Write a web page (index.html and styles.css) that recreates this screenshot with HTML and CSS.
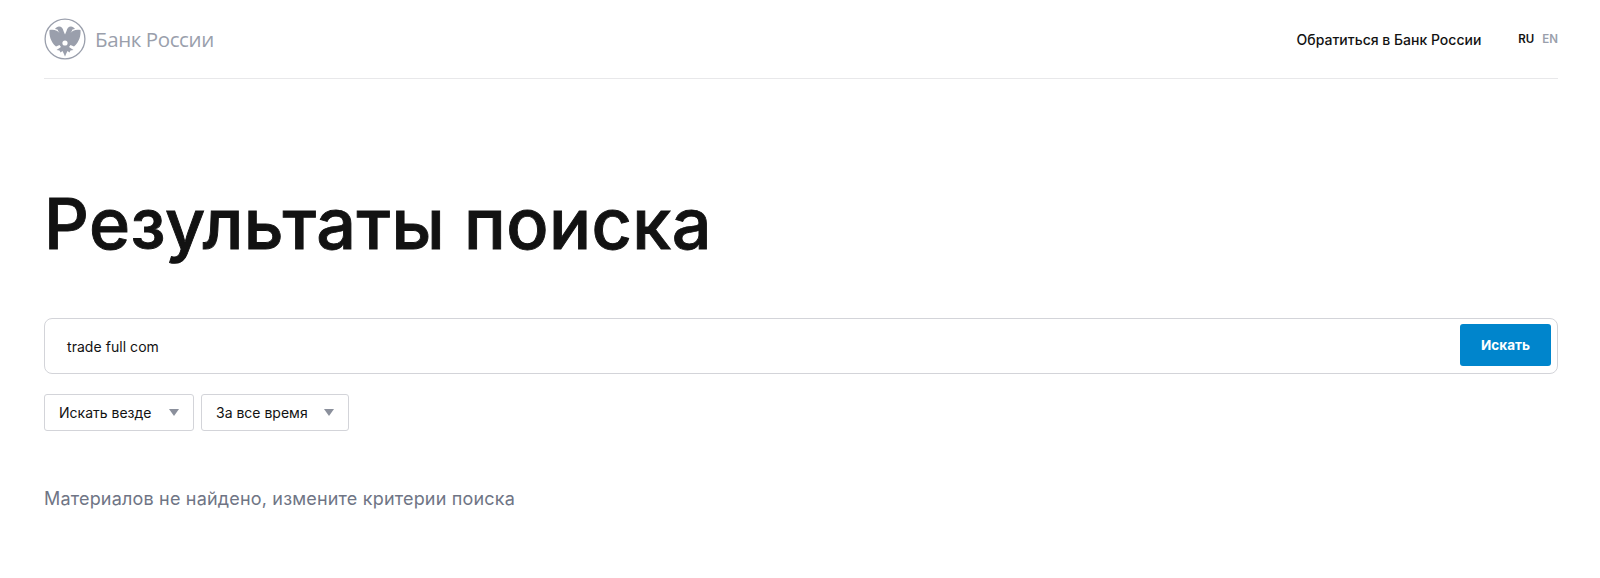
FILE: index.html
```html
<!DOCTYPE html>
<html lang="ru">
<head>
  <meta charset="UTF-8" />
  <meta name="viewport" content="width=device-width, initial-scale=1.0"/>
  <title>Результаты поиска</title>
  <link rel="stylesheet" href="styles.css">
</head>
<body>
  <header class="header">
    <a class="logo" href="#">
      <svg class="logo-icon" viewBox="0 0 42 42" width="42" height="42">
        <circle cx="21" cy="21" r="19.9" fill="none" stroke="#9a9fac" stroke-width="1.3"/>
        <path id="eagle-half" fill="#9a9fac" d="M21.2 17L19.5 13C19 10.5 17.5 8.5 15 8.5C13.5 8.5 12 9.5 11 11L13.5 11.5C14 13 15 14 15.5 15C14 12.5 10 11 5.5 12C5 17 6.5 24 12 28.5L15.5 27L17 29L12.5 32L15.5 32.5L16.5 34.5L18.5 33L21.2 38.5Z"/>
        <use href="#eagle-half" transform="matrix(-1 0 0 1 42 0)"/>
        <circle cx="21" cy="25" r="2.6" fill="#fff"/>
      </svg>
      <span class="logo-text">Банк России</span>
    </a>
    <nav class="header-nav">
      <a class="contact" href="#">Обратиться в Банк России</a>
      <div class="langs">
        <a class="lang active" href="#">RU</a>
        <a class="lang" href="#">EN</a>
      </div>
    </nav>
  </header>

  <main>
    <h1>Результаты поиска</h1>

    <form class="search">
      <span class="search-value">trade full com</span>
      <button class="search-btn" type="button">Искать</button>
    </form>

    <div class="filters">
      <div class="select select-where">Искать везде<span class="arrow"></span></div>
      <div class="select select-when">За все время<span class="arrow"></span></div>
    </div>

    <p class="empty">Материалов не найдено, измените критерии поиска</p>
  </main>
</body>
</html>
```

FILE: styles.css
```css
body {
  font-family: 'Inter', 'Liberation Sans', sans-serif;
  margin: 0;
  padding: 0 42px 0 44px;
  background-color: #fff;
  color: #121212;
}
a {
  color: inherit;
  text-decoration: none;
}
.header {
  display: flex;
  justify-content: space-between;
  align-items: center;
  height: 78px;
  border-bottom: 1px solid #e8e8ea;
}
.logo {
  display: flex;
  align-items: center;
  gap: 9px;
}
.logo-icon {
  display: block;
}
.logo-text {
  font-family: 'Open Sans', sans-serif;
  font-size: 20.5px;
  letter-spacing: -0.4px;
  color: #9a9fac;
}
.header-nav {
  display: flex;
  align-items: center;
  gap: 37px;
}
.contact {
  font-size: 14px;
  font-weight: 500;
}
.langs {
  display: flex;
  gap: 8px;
}
.lang {
  font-size: 11.5px;
  font-weight: 600;
  color: #9a9fac;
}
.lang.active {
  color: #121212;
}
h1 {
  font-size: 70px;
  font-weight: 500;
  line-height: 80px;
  letter-spacing: 0.42px;
  -webkit-text-stroke: 0.9px #121212;
  margin: 105px 0 0;
}
.search {
  display: flex;
  justify-content: space-between;
  align-items: center;
  box-sizing: border-box;
  height: 56px;
  margin-top: 54px;
  padding: 0 6px 0 22px;
  border: 1px solid #d3d4d9;
  border-radius: 8px;
}
.search-value {
  font-size: 14px;
  letter-spacing: 0.05px;
}
.search-btn {
  width: 91px;
  height: 42px;
  padding: 0;
  margin-bottom: 2px;
  border: 0;
  border-radius: 3px;
  background: #0085cc;
  color: #fff;
  font-family: inherit;
  font-size: 13.5px;
  font-weight: 700;
}
.filters {
  display: flex;
  gap: 7px;
  margin-top: 20px;
}
.select {
  display: flex;
  justify-content: space-between;
  align-items: center;
  box-sizing: border-box;
  height: 37px;
  padding: 0 14px;
  border: 1px solid #d3d4d9;
  border-radius: 3px;
  font-size: 14px;
}
.select-where {
  width: 150px;
}
.select-when {
  width: 148px;
}
.arrow {
  width: 0;
  height: 0;
  border-left: 5.5px solid transparent;
  border-right: 5.5px solid transparent;
  border-top: 7px solid #8b909c;
}
.empty {
  font-size: 18px;
  letter-spacing: 0.18px;
  color: #6f7585;
  margin: 57px 0 0;
}
```
